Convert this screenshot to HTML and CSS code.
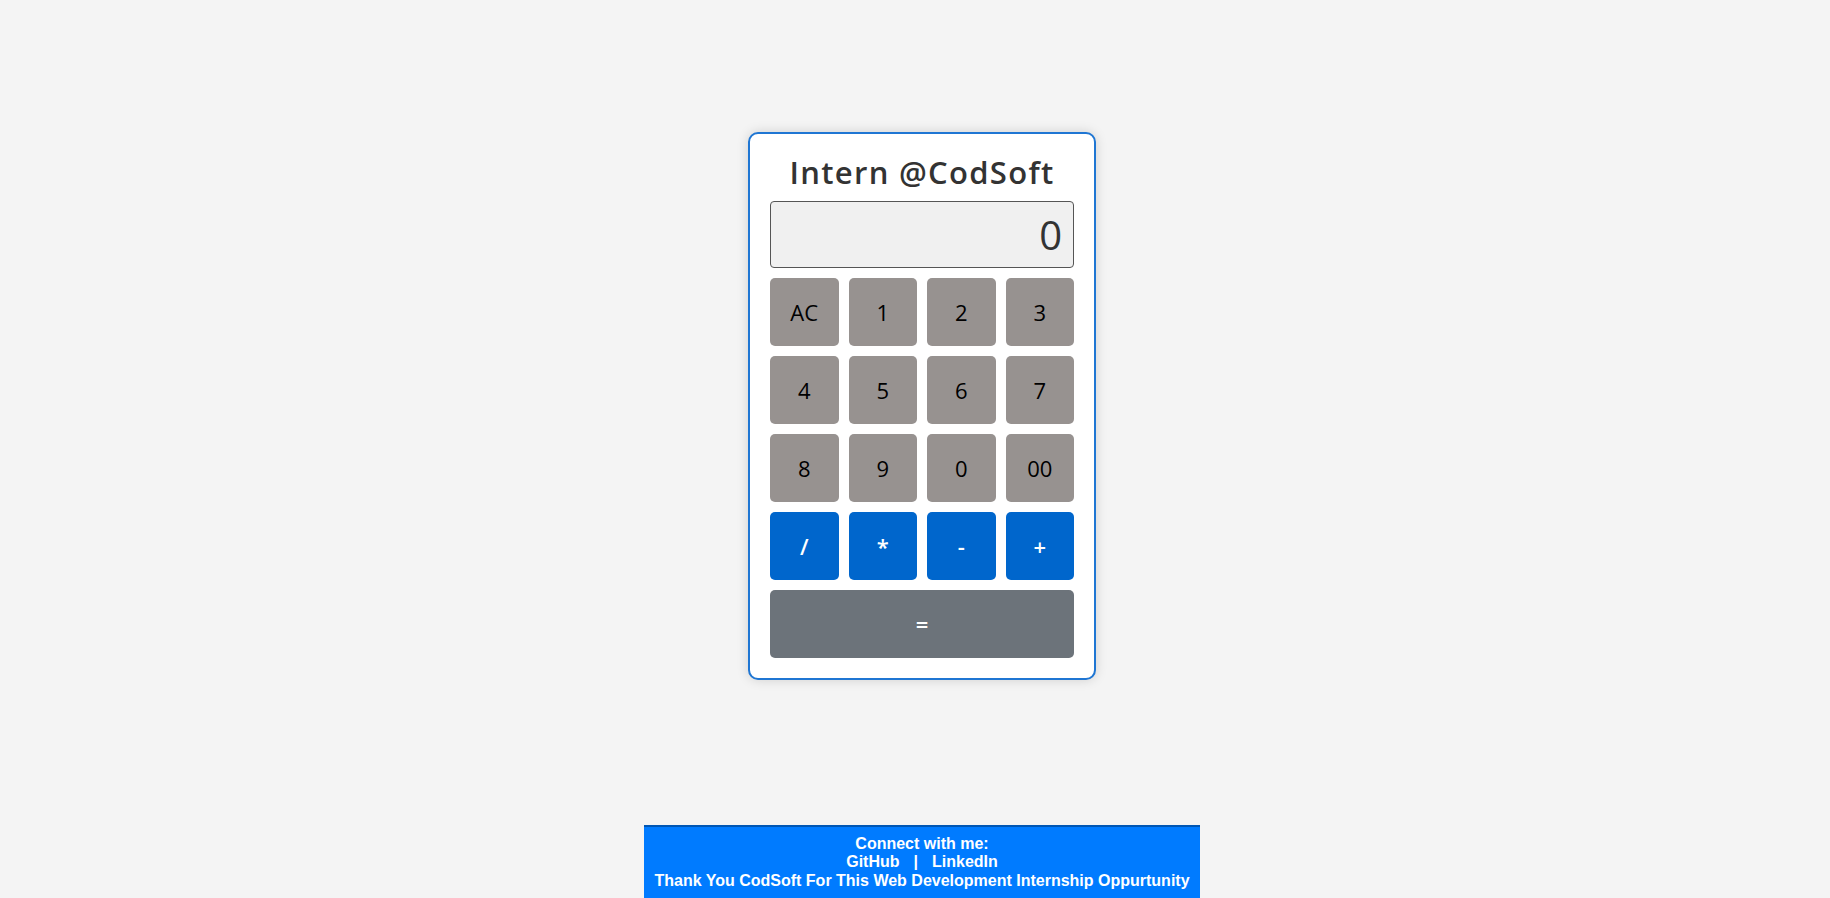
FILE: index.html
```html
<!DOCTYPE html>
<html lang="en">
<head>
<meta charset="utf-8">
<title>Calculator</title>
<link rel="stylesheet" href="styles.css">
</head>
<body>
<main class="main">
  <div class="calculator">
    <h1 class="title">Intern @CodSoft</h1>
    <div class="display">0</div>
    <div class="keys">
      <button class="key key-gray">AC</button>
      <button class="key key-gray">1</button>
      <button class="key key-gray">2</button>
      <button class="key key-gray">3</button>
      <button class="key key-gray">4</button>
      <button class="key key-gray">5</button>
      <button class="key key-gray">6</button>
      <button class="key key-gray">7</button>
      <button class="key key-gray">8</button>
      <button class="key key-gray">9</button>
      <button class="key key-gray">0</button>
      <button class="key key-gray">00</button>
      <button class="key key-blue">/</button>
      <button class="key key-blue">*</button>
      <button class="key key-blue">-</button>
      <button class="key key-blue">+</button>
      <button class="key key-equal">=</button>
    </div>
  </div>
</main>
<footer class="footer">
  <div>Connect with me:</div>
  <div><a class="link" href="#">GitHub</a><span class="sep">|</span><a class="link" href="#">LinkedIn</a></div>
  <div>Thank You CodSoft For This Web Development Internship Oppurtunity</div>
</footer>
</body>
</html>
```
FILE: styles.css
```css
html, body {
  margin: 0;
  padding: 0;
}
body {
  background: #f4f4f4;
  min-height: 100vh;
  box-sizing: border-box;
  padding-left: 14px;
  display: flex;
  flex-direction: column;
  align-items: center;
  font-family: "Open Sans", "DejaVu Sans", sans-serif;
}
.main {
  flex: 1;
  display: flex;
  justify-content: center;
  padding-top: 132px;
}
.calculator {
  width: 304px;
  height: 505px;
  padding: 20px 20px 19px;
  background: #fff;
  border: 2px solid #1f76d3;
  border-radius: 10px;
  box-shadow: 0 0 12px rgba(0, 0, 0, 0.15);
  box-sizing: content-box;
  display: flex;
  flex-direction: column;
}
.title {
  margin: 0 0 10px;
  font-size: 31px;
  line-height: 37px;
  font-weight: 600;
  letter-spacing: 1.3px;
  color: #333;
  text-align: center;
}
.display {
  height: 65px;
  border: 1px solid #555;
  border-radius: 4px;
  background: #f0f0f0;
  color: #333;
  font-size: 40px;
  line-height: 65px;
  text-align: right;
  padding-right: 11px;
  margin-bottom: 10px;
}
.keys {
  display: grid;
  grid-template-columns: repeat(4, 1fr);
  grid-auto-rows: 68px;
  gap: 10px;
}
.key {
  border: none;
  border-radius: 5px;
  font-family: "Open Sans", "DejaVu Sans", sans-serif;
  font-size: 22px;
  padding: 0;
  cursor: pointer;
}
.key-gray {
  background: #979290;
  color: #000;
}
.key-blue {
  background: #0066cc;
  color: #fff;
  font-weight: 600;
}
.key-equal {
  grid-column: 1 / -1;
  background: #6c737a;
  color: #fff;
  font-weight: 600;
}
.footer {
  width: 556px;
  box-sizing: border-box;
  background: #007bff;
  border-top: 2px solid #0056b3;
  padding: 8px 0;
  color: #fff;
  font-family: "Liberation Sans", Arial, sans-serif;
  font-weight: bold;
  font-size: 16px;
  line-height: 18.4px;
  text-align: center;
}
.link {
  color: #fff;
  text-decoration: none;
}
.sep {
  margin: 0 14px;
}
```
